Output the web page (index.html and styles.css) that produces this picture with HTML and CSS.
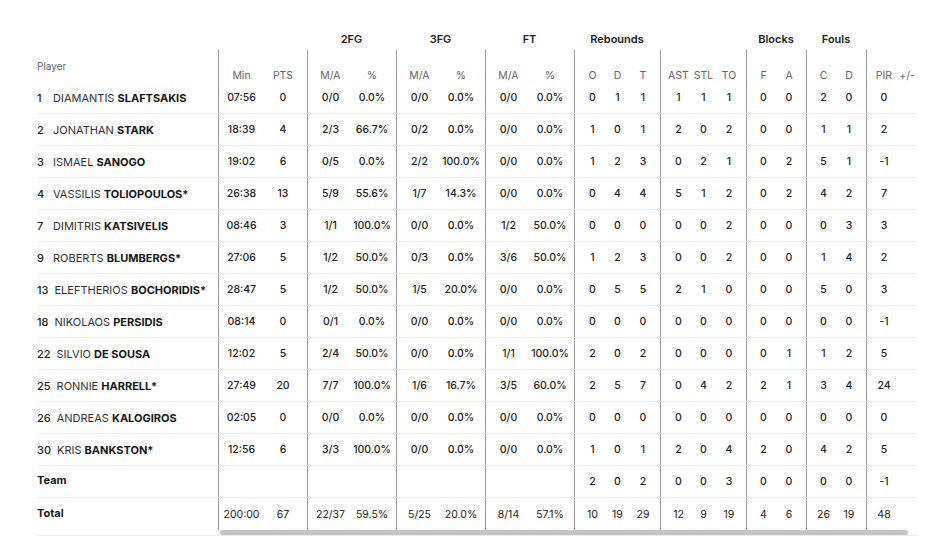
FILE: index.html
```html
<!DOCTYPE html>
<html>
<head>
<meta charset="utf-8">
<link rel="stylesheet" href="styles.css">
</head>
<body>
<div class="box">
  <div class="row groups">
    <div></div>
    <div class="span2"></div>
    <div class="span2">2FG</div>
    <div class="span2">3FG</div>
    <div class="span2">FT</div>
    <div class="span3">Rebounds</div>
    <div class="span3"></div>
    <div class="span2">Blocks</div>
    <div class="span2">Fouls</div>
    <div class="span2"></div>
  </div>
  <div class="row head">
    <div class="name">Player</div>
    <div>Min</div><div>PTS</div>
    <div>M/A</div><div>%</div>
    <div>M/A</div><div>%</div>
    <div>M/A</div><div>%</div>
    <div>O</div><div>D</div><div>T</div>
    <div>AST</div><div>STL</div><div>TO</div>
    <div>F</div><div>A</div>
    <div>C</div><div>D</div>
    <div>PIR</div><div>+/-</div>
  </div>

  <div class="row">
    <div class="name"><span class="no">1</span>DIAMANTIS&nbsp;<b>SLAFTSAKIS</b></div>
    <div>07:56</div><div>0</div><div>0/0</div><div>0.0%</div><div>0/0</div><div>0.0%</div><div>0/0</div><div>0.0%</div>
    <div>0</div><div>1</div><div>1</div><div>1</div><div>1</div><div>1</div><div>0</div><div>0</div><div>2</div><div>0</div><div>0</div><div></div>
  </div>
  <div class="row">
    <div class="name"><span class="no">2</span>JONATHAN&nbsp;<b>STARK</b></div>
    <div>18:39</div><div>4</div><div>2/3</div><div>66.7%</div><div>0/2</div><div>0.0%</div><div>0/0</div><div>0.0%</div>
    <div>1</div><div>0</div><div>1</div><div>2</div><div>0</div><div>2</div><div>0</div><div>0</div><div>1</div><div>1</div><div>2</div><div></div>
  </div>
  <div class="row">
    <div class="name"><span class="no">3</span>ISMAEL&nbsp;<b>SANOGO</b></div>
    <div>19:02</div><div>6</div><div>0/5</div><div>0.0%</div><div>2/2</div><div>100.0%</div><div>0/0</div><div>0.0%</div>
    <div>1</div><div>2</div><div>3</div><div>0</div><div>2</div><div>1</div><div>0</div><div>2</div><div>5</div><div>1</div><div>-1</div><div></div>
  </div>
  <div class="row">
    <div class="name"><span class="no">4</span>VASSILIS&nbsp;<b>TOLIOPOULOS*</b></div>
    <div>26:38</div><div>13</div><div>5/9</div><div>55.6%</div><div>1/7</div><div>14.3%</div><div>0/0</div><div>0.0%</div>
    <div>0</div><div>4</div><div>4</div><div>5</div><div>1</div><div>2</div><div>0</div><div>2</div><div>4</div><div>2</div><div>7</div><div></div>
  </div>
  <div class="row">
    <div class="name"><span class="no">7</span>DIMITRIS&nbsp;<b>KATSIVELIS</b></div>
    <div>08:46</div><div>3</div><div>1/1</div><div>100.0%</div><div>0/0</div><div>0.0%</div><div>1/2</div><div>50.0%</div>
    <div>0</div><div>0</div><div>0</div><div>0</div><div>0</div><div>2</div><div>0</div><div>0</div><div>0</div><div>3</div><div>3</div><div></div>
  </div>
  <div class="row">
    <div class="name"><span class="no">9</span>ROBERTS&nbsp;<b>BLUMBERGS*</b></div>
    <div>27:06</div><div>5</div><div>1/2</div><div>50.0%</div><div>0/3</div><div>0.0%</div><div>3/6</div><div>50.0%</div>
    <div>1</div><div>2</div><div>3</div><div>0</div><div>0</div><div>2</div><div>0</div><div>0</div><div>1</div><div>4</div><div>2</div><div></div>
  </div>
  <div class="row">
    <div class="name"><span class="no">13</span>ELEFTHERIOS&nbsp;<b>BOCHORIDIS*</b></div>
    <div>28:47</div><div>5</div><div>1/2</div><div>50.0%</div><div>1/5</div><div>20.0%</div><div>0/0</div><div>0.0%</div>
    <div>0</div><div>5</div><div>5</div><div>2</div><div>1</div><div>0</div><div>0</div><div>0</div><div>5</div><div>0</div><div>3</div><div></div>
  </div>
  <div class="row">
    <div class="name"><span class="no">18</span>NIKOLAOS&nbsp;<b>PERSIDIS</b></div>
    <div>08:14</div><div>0</div><div>0/1</div><div>0.0%</div><div>0/0</div><div>0.0%</div><div>0/0</div><div>0.0%</div>
    <div>0</div><div>0</div><div>0</div><div>0</div><div>0</div><div>0</div><div>0</div><div>0</div><div>0</div><div>0</div><div>-1</div><div></div>
  </div>
  <div class="row">
    <div class="name"><span class="no">22</span>SILVIO&nbsp;<b>DE SOUSA</b></div>
    <div>12:02</div><div>5</div><div>2/4</div><div>50.0%</div><div>0/0</div><div>0.0%</div><div>1/1</div><div>100.0%</div>
    <div>2</div><div>0</div><div>2</div><div>0</div><div>0</div><div>0</div><div>0</div><div>1</div><div>1</div><div>2</div><div>5</div><div></div>
  </div>
  <div class="row">
    <div class="name"><span class="no">25</span>RONNIE&nbsp;<b>HARRELL*</b></div>
    <div>27:49</div><div>20</div><div>7/7</div><div>100.0%</div><div>1/6</div><div>16.7%</div><div>3/5</div><div>60.0%</div>
    <div>2</div><div>5</div><div>7</div><div>0</div><div>4</div><div>2</div><div>2</div><div>1</div><div>3</div><div>4</div><div>24</div><div></div>
  </div>
  <div class="row">
    <div class="name"><span class="no">26</span>ANDREAS&nbsp;<b>KALOGIROS</b></div>
    <div>02:05</div><div>0</div><div>0/0</div><div>0.0%</div><div>0/0</div><div>0.0%</div><div>0/0</div><div>0.0%</div>
    <div>0</div><div>0</div><div>0</div><div>0</div><div>0</div><div>0</div><div>0</div><div>0</div><div>0</div><div>0</div><div>0</div><div></div>
  </div>
  <div class="row">
    <div class="name"><span class="no">30</span>KRIS&nbsp;<b>BANKSTON*</b></div>
    <div>12:56</div><div>6</div><div>3/3</div><div>100.0%</div><div>0/0</div><div>0.0%</div><div>0/0</div><div>0.0%</div>
    <div>1</div><div>0</div><div>1</div><div>2</div><div>0</div><div>4</div><div>2</div><div>0</div><div>4</div><div>2</div><div>5</div><div></div>
  </div>
  <div class="row">
    <div class="name label">Team</div>
    <div></div><div></div><div></div><div></div><div></div><div></div><div></div><div></div>
    <div>2</div><div>0</div><div>2</div><div>0</div><div>0</div><div>3</div><div>0</div><div>0</div><div>0</div><div>0</div><div>-1</div><div></div>
  </div>
  <div class="row total">
    <div class="name label">Total</div>
    <div>200:00</div><div>67</div><div>22/37</div><div>59.5%</div><div>5/25</div><div>20.0%</div><div>8/14</div><div>57.1%</div>
    <div>10</div><div>19</div><div>29</div><div>12</div><div>9</div><div>19</div><div>4</div><div>6</div><div>26</div><div>19</div><div>48</div><div></div>
  </div>
  <div class="scroll"><div class="thumb"></div></div>
</div>
</body>
</html>
```

FILE: styles.css
```css
* { box-sizing: border-box; }
html, body { margin: 0; padding: 0; background: #fff; }
body {
  font-family: Inter, "Noto Sans", "Liberation Sans", sans-serif;
  font-size: 10.5px;
  color: #222;
}
.box {
  width: 881px;
  margin-left: 37px;
  padding-top: 28px;
}
.row {
  display: grid;
  grid-template-columns: 181px 46px 43px 46px 43px 46px 43px 46px 43px 31px 25px 30px 31px 25px 30px 30px 30px 30px 30px 30px 22px;
  height: 32px;
  border-bottom: 1px solid #ececec;
}
.row > div {
  display: flex;
  align-items: center;
  justify-content: center;
  white-space: nowrap;
  font-weight: 500;
}
.row > :nth-child(2), .row > :nth-child(4), .row > :nth-child(6), .row > :nth-child(8),
.row > :nth-child(10), .row > :nth-child(13), .row > :nth-child(16), .row > :nth-child(18),
.row > :nth-child(20) {
  border-left: 1px solid #9a9a9a;
}
.row > :nth-child(3), .row > :nth-child(5), .row > :nth-child(7), .row > :nth-child(9) { padding-right: 5px; }
.row > :nth-child(10), .row > :nth-child(13), .row > :nth-child(20) { padding-left: 5px; }
.row > :nth-child(12), .row > :nth-child(15), .row > :nth-child(17), .row > :nth-child(19) { padding-right: 4px; }
.row > :nth-child(16), .row > :nth-child(18) { padding-left: 4px; }

.row > .name {
  justify-content: flex-start;
  font-weight: 400;
  font-size: 11px;
  color: #333;
}
.no {
  display: inline-block;
  min-width: 10px;
  margin-right: 6px;
  font-weight: 500;
  color: #222;
}
.name b { font-weight: 700; color: #161616; }

.groups {
  height: 22px;
  border-bottom: none;
}
.groups > div {
  border-left: none !important;
  padding: 0 !important;
  font-weight: 600;
  font-size: 11px;
  color: #222;
}
.span2 { grid-column: span 2; }
.span3 { grid-column: span 3; }

.head { border-bottom: none; }
.head > div {
  align-items: flex-end;
  line-height: 12px;
  font-weight: 400;
  color: #666;
  font-size: 10.5px;
}
.row.head > .name {
  align-items: flex-start;
  padding-top: 10px;
  font-size: 10px;
  color: #666;
}
.row > .label {
  font-weight: 700;
  color: #1a1a1a;
  padding-bottom: 3px;
}
.total { border-bottom: none; }
.total > div { font-weight: 400; }
.row.total > .label { font-weight: 700; }

.scroll {
  height: 6px;
  border-bottom: 1px solid #ececec;
  padding-left: 183px;
}
.thumb {
  width: 688px;
  height: 5px;
  border-radius: 3px;
  background: #c4c4c4;
}
```
